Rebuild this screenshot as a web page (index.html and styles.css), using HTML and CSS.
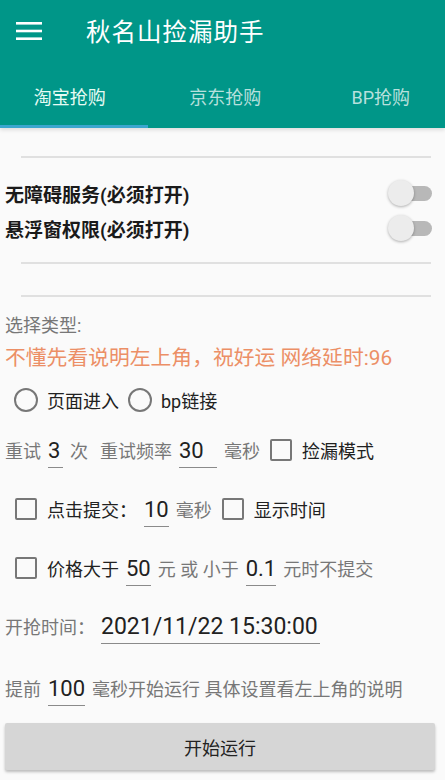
FILE: index.html
```html
<!DOCTYPE html>
<html lang="zh-CN">
<head>
    <meta charset="UTF-8">
    <meta name="viewport" content="width=device-width, initial-scale=1.0">
    <title>秋名山捡漏助手</title>
    <link rel="stylesheet" href="styles.css">
</head>
<body>

<div class="app-header">
    <div class="toolbar">
        <svg class="menu-icon" width="26" height="18" viewBox="0 0 26 18">
            <rect x="0" y="0" width="26" height="2.6" fill="#fff"/>
            <rect x="0" y="7.7" width="26" height="2.6" fill="#fff"/>
            <rect x="0" y="15.4" width="26" height="2.6" fill="#fff"/>
        </svg>
        <div class="app-title">秋名山捡漏助手</div>
    </div>
    <div class="tabs">
        <div class="tab active">淘宝抢购</div>
        <div class="tab">京东抢购</div>
        <div class="tab">BP抢购</div>
    </div>
</div>

<div class="content">
    <div class="divider first"></div>

    <div class="switches">
        <div class="switch-row">
            <span class="switch-label">无障碍服务(必须打开)</span>
            <span class="switch"><span class="thumb"></span></span>
        </div>
        <div class="switch-row">
            <span class="switch-label">悬浮窗权限(必须打开)</span>
            <span class="switch"><span class="thumb"></span></span>
        </div>
    </div>

    <div class="divider second"></div>
    <div class="divider third"></div>

    <div class="line muted type-label">选择类型:</div>
    <div class="line notice">不懂先看说明左上角，祝好运 网络延时:96</div>

    <div class="row radio-row">
        <span class="radio"></span>
        <span class="dark">页面进入</span>
        <span class="radio"></span>
        <span class="dark">bp链接</span>
    </div>

    <div class="row row-retry">
        <span class="muted">重试</span>
        <span class="field w-small">3</span>
        <span class="muted">次</span>
        <span class="muted gap-left">重试频率</span>
        <span class="field w-mid">30</span>
        <span class="muted">毫秒</span>
        <span class="checkbox"></span>
        <span class="dark">捡漏模式</span>
    </div>

    <div class="row row-submit indent">
        <span class="checkbox"></span>
        <span class="dark">点击提交：</span>
        <span class="field">10</span>
        <span class="muted">毫秒</span>
        <span class="checkbox"></span>
        <span class="dark">显示时间</span>
    </div>

    <div class="row row-price indent">
        <span class="checkbox"></span>
        <span class="dark">价格大于</span>
        <span class="field">50</span>
        <span class="muted">元 或 小于</span>
        <span class="field">0.1</span>
        <span class="muted">元时不提交</span>
    </div>

    <div class="row row-time">
        <span class="muted">开抢时间：</span>
        <span class="field time-field">2021/11/22 15:30:00</span>
    </div>

    <div class="row row-advance">
        <span class="muted">提前</span>
        <span class="field">100</span>
        <span class="muted">毫秒开始运行 具体设置看左上角的说明</span>
    </div>

    <button class="start-button">开始运行</button>
</div>

</body>
</html>
```

FILE: styles.css
```css
/* General styling */
body {
    margin: 0;
    width: 445px;
    height: 780px;
    overflow: hidden;
    background-color: #fafafa;
    font-family: Roboto, "Noto Sans CJK SC", sans-serif;
    color: #212121;
}

/* Header */
.app-header {
    background-color: #009688;
    box-shadow: 0 2px 4px rgba(0, 0, 0, 0.12);
    overflow: hidden;
}

.toolbar {
    height: 60px;
    display: flex;
    align-items: center;
    padding-left: 16px;
}

.menu-icon {
    display: block;
    margin-top: 1px;
}

.app-title {
    margin-left: 44px;
    font-size: 24.5px;
    color: #fff;
    letter-spacing: 1px;
}

.tabs {
    display: flex;
    height: 68px;
    margin-left: -8px;
}

.tab {
    flex: 0 0 155.5px;
    display: flex;
    align-items: center;
    justify-content: center;
    font-size: 18px;
    color: rgba(255, 255, 255, 0.72);
    padding-top: 6px;
    box-sizing: border-box;
    border-bottom: 3px solid transparent;
}

.tab.active {
    color: #e6fbf4;
    border-bottom-color: #3aa6cf;
}

/* Content */
.content {
    padding: 0 5px;
}

.divider {
    height: 2px;
    background-color: #e0e0e0;
    margin: 0 9px 0 16px;
}

.divider.first {
    margin-top: 28px;
}

.divider.second {
    margin-top: 16px;
}

.divider.third {
    margin-top: 31px;
}

.switches {
    margin-top: 18px;
}

.switch-row {
    height: 35px;
    display: flex;
    align-items: center;
    justify-content: space-between;
    font-size: 19px;
    font-weight: bold;
    color: #1a1a1a;
}

.switch {
    position: relative;
    width: 32px;
    height: 15px;
    margin-right: 8px;
    background-color: #b8b8b8;
    border-radius: 8px;
}

.thumb {
    position: absolute;
    left: -12px;
    top: -6px;
    width: 26px;
    height: 26px;
    border-radius: 50%;
    background-color: #ececec;
    box-shadow: 0 1px 3px rgba(0, 0, 0, 0.3);
}

.line {
    height: 32px;
    line-height: 32px;
}

.type-label {
    margin-top: 13px;
    font-size: 19px;
}

.notice {
    font-size: 20.8px;
    color: #ec8f66;
}

.muted {
    color: #777;
    font-size: 18px;
}

.dark {
    color: #212121;
    font-size: 18px;
}

.row {
    display: flex;
    align-items: center;
    gap: 7px;
}

.indent {
    padding-left: 7px;
}

.radio-row {
    height: 40px;
    margin-top: 6px;
    padding-left: 9px;
    gap: 9px;
}

.radio {
    width: 20px;
    height: 20px;
    border: 2px solid #777;
    border-radius: 50%;
}

.checkbox {
    width: 18px;
    height: 18px;
    border: 2px solid #777;
    border-radius: 2px;
    margin-left: 3px;
    margin-right: 3px;
}

.row-retry {
    height: 60px;
}

.row-submit {
    height: 58px;
}

.row-price {
    height: 60px;
}

.row-time {
    height: 56px;
    gap: 6px;
}

.row-advance {
    height: 68px;
}

.gap-left {
    margin-left: 5px;
}

.field {
    font-size: 22px;
    line-height: 24px;
    color: #212121;
    padding: 6px 0 4px;
    border-bottom: 1.5px solid #8a8a8a;
}

.w-small {
    min-width: 15px;
}

.w-mid {
    min-width: 38px;
}

.time-field {
    font-size: 23px;
    width: 219px;
}

/* Button */
.start-button {
    display: block;
    width: 430px;
    height: 47px;
    margin-top: 1px;
    border: none;
    border-radius: 2px;
    background-color: #d6d6d6;
    box-shadow: 0 2px 3px rgba(0, 0, 0, 0.25);
    font-family: Roboto, "Noto Sans CJK SC", sans-serif;
    font-size: 18px;
    color: #222;
}
```
